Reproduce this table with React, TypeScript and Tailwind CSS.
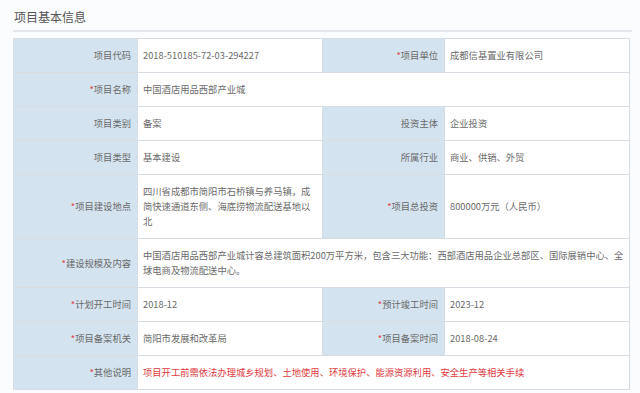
type Row = {
    label: string;
    req?: boolean;
    value: string;
    label2?: string;
    req2?: boolean;
    value2?: string;
    red?: boolean;
};

const rows: Row[] = [
    { label: "项目代码", value: "2018-510185-72-03-294227", label2: "项目单位", req2: true, value2: "成都信基置业有限公司" },
    { label: "项目名称", req: true, value: "中国酒店用品西部产业城" },
    { label: "项目类别", value: "备案", label2: "投资主体", value2: "企业投资" },
    { label: "项目类型", value: "基本建设", label2: "所属行业", value2: "商业、供销、外贸" },
    { label: "项目建设地点", req: true, value: "四川省成都市简阳市石桥镇与养马镇，成简快速通道东侧、海底捞物流配送基地以北", label2: "项目总投资", req2: true, value2: "800000万元（人民币）" },
    { label: "建设规模及内容", req: true, value: "中国酒店用品西部产业城计容总建筑面积200万平方米，包含三大功能：西部酒店用品企业总部区、国际展销中心、全球电商及物流配送中心。" },
    { label: "计划开工时间", req: true, value: "2018-12", label2: "预计竣工时间", req2: true, value2: "2023-12" },
    { label: "项目备案机关", req: true, value: "简阳市发展和改革局", label2: "项目备案时间", req2: true, value2: "2018-08-24" },
    { label: "其他说明", req: true, value: "项目开工前需依法办理城乡规划、土地使用、环境保护、能源资源利用、安全生产等相关手续", red: true },
];

const Label = ({ text, req }: { text: string; req?: boolean }) => (
    <td className="border border-[#d8dde3] bg-[#d3e3f0] text-right pr-[6px] align-middle whitespace-nowrap">
        {req && <span className="text-[#e0474c]">*</span>}
        {text}
    </td>
);

const App = () => {
    return (
        <div
            className="w-[640px] h-[393px] bg-[#fbfcfd] text-[#6a6a6a] overflow-hidden"
            style={{ fontFamily: '"Noto Sans CJK SC", "Noto Sans", sans-serif' }}
        >
            <div className="pl-[13px] pr-[8px] pt-[9px]">
                <div className="text-[12px] leading-[16px] text-[#555] pl-[1px]">项目基本信息</div>
                <div className="mt-[5px] border-t-2 border-[#e3e6ea]" />
            </div>
            <div className="px-[13px] pt-[6px]">
                <table className="border-collapse w-[616px] table-fixed text-[9.3px] leading-[15px]">
                    <colgroup>
                        <col className="w-[124px]" />
                        <col className="w-[185px]" />
                        <col className="w-[122px]" />
                        <col className="w-[185px]" />
                    </colgroup>
                    <tbody>
                        {rows.map((r, i) => (
                            <tr key={i}>
                                <Label text={r.label} req={r.req} />
                                {r.label2 ? (
                                    <>
                                        <td className="border border-[#d8dde3] bg-white pl-[5px] pr-[6px] py-[9px] align-middle">{r.value}</td>
                                        <Label text={r.label2} req={r.req2} />
                                        <td className="border border-[#d8dde3] bg-white pl-[5px] pr-[6px] py-[9px] align-middle">{r.value2}</td>
                                    </>
                                ) : (
                                    <td
                                        colSpan={3}
                                        className={`border border-[#d8dde3] bg-white pl-[5px] pr-[1px] py-[9px] align-middle ${r.red ? "text-[#e0393e]" : ""}`}
                                    >
                                        {r.value}
                                    </td>
                                )}
                            </tr>
                        ))}
                    </tbody>
                </table>
            </div>
        </div>
    );
};

export default App;
